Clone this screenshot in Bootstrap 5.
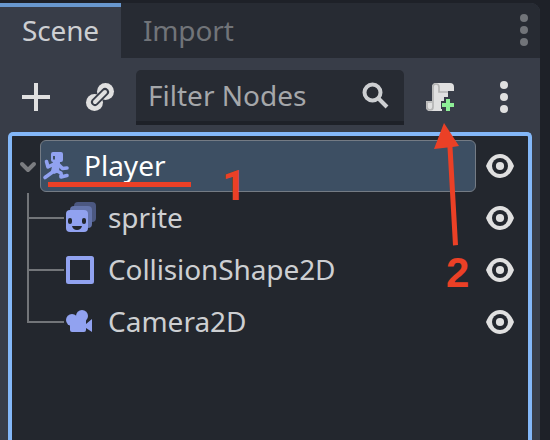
<!DOCTYPE html>
<html lang="en">
<head>
<meta charset="utf-8">
<meta name="viewport" content="width=device-width, initial-scale=1">
<title>Scene</title>
<link href="https://cdn.jsdelivr.net/npm/bootstrap@5.3.0/dist/css/bootstrap.min.css" rel="stylesheet">
<style>
body{background:#1e2128;font:28px/38px "Noto Sans",sans-serif;color:#cdcfd2;width:550px;height:440px}
svg{display:block;flex:none}
.dock{width:540px;height:437px;margin-top:3px;background:#383d48;border-top-right-radius:9px}
.tabs{height:55px;background:#272b33}
.tab-item{height:55px;padding:8px 22px 0;color:#717479;letter-spacing:-.15px}
.tab-item.active{width:121px;background:#383d48;border-top:4px solid #6998cf;padding-top:4px;color:#cdcfd2}
.tools{height:74px;padding:12px 20px 0}
.tool-gap{margin-left:20px}
.tool-gap-lg{margin-left:32px}
.filter{width:268px;height:55px;background:#272b33;border-bottom:4px solid #1e2128;border-radius:5px 5px 0 0;padding:0 12px;color:#a5a7aa}
.filter span{margin-top:-2px}
.tree{margin:0 8px;height:308px;border:4px solid #83b7f8;border-bottom:0;border-radius:5px 5px 0 0;background:#23272e;padding-top:4px}
.tree-row{height:52px;padding-right:12px}
.child-row{padding-left:52px}
.node-name{margin:-2px 0 0 12px}
.tight{letter-spacing:-.1px}
.picked{width:436px;height:52px;border:1px solid #747b84;border-radius:6px;background:#3d4f63;color:#fff}
.picked .node-name{margin-left:11px}
.guides{left:27px;top:193px}
.marks{left:0;top:0}
</style>
<script src="https://cdn.jsdelivr.net/npm/bootstrap@5.3.0/dist/js/bootstrap.bundle.min.js"></script>
</head>
<body class="overflow-hidden position-relative">
<svg width="0" height="0" class="position-absolute"><defs>
<symbol id="eye" viewBox="0 0 32 32"><path d="M2 16C5 8 10 4 16 4s11 4 14 12c-3 8-8 12-14 12S5 24 2 16z" fill="#e0e0e0"/><circle cx="16" cy="16" r="8" fill="#23272e"/><circle cx="16" cy="16" r="4.1" fill="#e0e0e0"/></symbol>
</defs></svg>
<main class="dock overflow-hidden">
  <nav class="tabs d-flex">
    <div class="tab-item active">Scene</div>
    <div class="tab-item">Import</div>
    <svg class="ms-auto me-2" width="16" height="55" fill="#717479"><circle cx="8" cy="15" r="4"/><circle cx="8" cy="27" r="4"/><circle cx="8" cy="39" r="4"/></svg>
  </nav>
  <div class="tools d-flex">
    <svg width="32" height="55"><path d="M2 27H30M16 13V41" stroke="#e0e0e0" stroke-width="4"/></svg>
    <svg class="tool-gap-lg" width="32" height="55" viewBox="0 -11 32 55" stroke-linecap="round"><g fill="#e0e0e0"><circle cx="21.500" cy="10.500" r="8.500"/><circle cx="10.500" cy="21.500" r="8.500"/></g><path d="M11 21L21 11" stroke="#383d48" stroke-width="8"/><path d="M11 21L21 11" stroke="#e0e0e0" stroke-width="4"/></svg>
    <div class="filter tool-gap d-flex align-items-center justify-content-between"><span>Filter Nodes</span>
      <svg width="32" height="32" fill="none" stroke="#cdcfd2" stroke-width="4"><circle cx="12.500" cy="12.500" r="8"/><path d="M18 18L27 27"/></svg>
    </div>
    <svg class="tool-gap" width="32" height="55" viewBox="0 -11 32 55"><path d="M12 2H26Q30 2 30 6V10H24V16H20V20H17V28H18V30H6Q2 30 2 26V20H8V6Q8 2 12 2z" fill="#e0e0e0"/><path d="M12 3Q15 3 15 6V11H24M12 3Q9 3 9 6V26Q9 29 6 29Q3 29 3 26V21H8" fill="none" stroke="#b4b4b4" stroke-width="1.700"/><path d="M18 24H30M24 18V30" stroke="#8eef97" stroke-width="4"/></svg>
    <svg class="ms-auto" width="32" height="55" fill="#e0e0e0"><circle cx="16" cy="15" r="4"/><circle cx="16" cy="27" r="4"/><circle cx="16" cy="39" r="4"/></svg>
  </div>
  <section class="tree">
    <div class="tree-row d-flex align-items-center">
      <svg width="28" height="52"><path d="M10 24L16 30L22 24" fill="none" stroke="#7b7d81" stroke-width="4" stroke-linecap="round" stroke-linejoin="round"/></svg>
      <div class="picked d-flex align-items-center"><svg width="32" height="32" viewBox="1 0 32 32" fill="#91a2f0"><path fill-rule="evenodd" d="M13 2H21Q23 2 23 4V10Q23 12 21 12H13Q11 12 11 10V4Q11 2 13 2zM13 6V9.500H15V6z"/><path d="M13 12H20L19 22L14 24L11 21z"/><path d="M6.500 11.500L8 17L14 14M18 14L22.500 18.500L27 18M14 21L5 27.500M16 20.500L21 23L21 27L27 25.500" fill="none" stroke="#91a2f0" stroke-width="3.600" stroke-linecap="round" stroke-linejoin="round"/></svg><span class="node-name">Player</span></div>
      <svg class="ms-auto" width="32" height="32"><use href="#eye"/></svg>
    </div>
    <div class="tree-row child-row d-flex align-items-center">
      <svg width="32" height="32" fill="#91a2f0"><rect x="10" y="0" width="22" height="20" rx="4" fill="#4c5881"/><rect x="6" y="4" width="22" height="22" rx="4" fill="#6474ab"/><rect x="2" y="8" width="22" height="22" rx="4"/><g fill="#23272e"><rect x="4" y="16" width="4" height="6" rx="2"/><rect x="18" y="16" width="4" height="6" rx="2"/><path d="M8 24H18Q17 28 13 28T8 24z"/></g></svg><span class="node-name tight">sprite</span>
      <svg class="ms-auto" width="32" height="32"><use href="#eye"/></svg>
    </div>
    <div class="tree-row child-row d-flex align-items-center">
      <svg width="32" height="32"><rect x="4" y="4" width="24" height="24" rx=".5" fill="none" stroke="#91a2f0" stroke-width="4"/></svg><span class="node-name tight">CollisionShape2D</span>
      <svg class="ms-auto" width="32" height="32"><use href="#eye"/></svg>
    </div>
    <div class="tree-row child-row d-flex align-items-center">
      <svg width="32" height="32" fill="#91a2f0"><circle cx="18" cy="10" r="6"/><circle cx="8" cy="14" r="6"/><path d="M6 12H22V18L28 13V26L22 22V24Q22 26 20 26H8Q6 26 6 24z"/></svg><span class="node-name">Camera2D</span>
      <svg class="ms-auto" width="32" height="32"><use href="#eye"/></svg>
    </div>
  </section>
</main>
<svg class="guides position-absolute" width="40" height="132" fill="none" stroke="#727579" stroke-width="2"><path d="M1 0V129H37M1 25H37M1 77H37"/></svg>
<svg class="marks position-absolute" width="550" height="440" fill="#eb4026" font-family="Liberation Sans,sans-serif" font-weight="700" font-size="42"><path d="M48 182H191V187H48zM444 123L459 146L452.500 147L458 245L453 245.500L447.500 147.500L434 149z"/><text x="222" y="200" font-family="Roboto,sans-serif">1</text><text x="446" y="287">2</text></svg>
</body>
</html>
